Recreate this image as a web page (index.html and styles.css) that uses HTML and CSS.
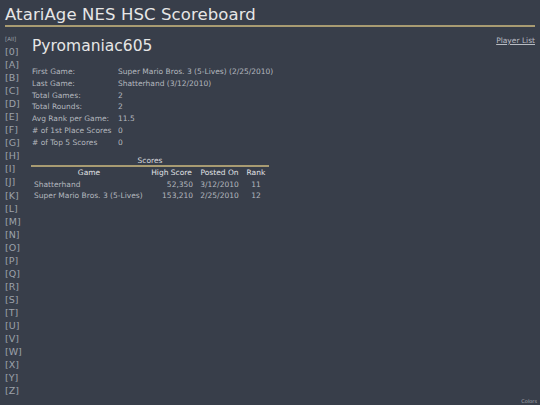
FILE: index.html
```html
<!DOCTYPE html>
<html>
<head>
<meta charset="utf-8">
<link rel="stylesheet" href="styles.css">
</head>
<body>
<div class="page">
  <h1 class="title">AtariAge NES HSC Scoreboard</h1>
  <div class="body">
    <nav class="letters">
      <a class="all">[All]</a>
      <a>[0]</a><a>[A]</a><a>[B]</a><a>[C]</a><a>[D]</a><a>[E]</a><a>[F]</a><a>[G]</a><a>[H]</a><a>[I]</a><a>[J]</a><a>[K]</a><a>[L]</a><a>[M]</a><a>[N]</a><a>[O]</a><a>[P]</a><a>[Q]</a><a>[R]</a><a>[S]</a><a>[T]</a><a>[U]</a><a>[V]</a><a>[W]</a><a>[X]</a><a>[Y]</a><a>[Z]</a>
    </nav>
    <main class="main">
      <div class="topline">
        <h2 class="player">Pyromaniac605</h2>
        <a class="plist">Player List</a>
      </div>
      <table class="info">
        <tr><td class="lbl">First Game:</td><td>Super Mario Bros. 3 (5-Lives) (2/25/2010)</td></tr>
        <tr><td class="lbl">Last Game:</td><td>Shatterhand (3/12/2010)</td></tr>
        <tr><td class="lbl">Total Games:</td><td>2</td></tr>
        <tr><td class="lbl">Total Rounds:</td><td>2</td></tr>
        <tr><td class="lbl">Avg Rank per Game:</td><td>11.5</td></tr>
        <tr><td class="lbl"># of 1st Place Scores</td><td>0</td></tr>
        <tr><td class="lbl"># of Top 5 Scores</td><td>0</td></tr>
      </table>
      <table class="scores">
        <caption>Scores</caption>
        <thead>
          <tr><th class="game">Game</th><th>High Score</th><th>Posted On</th><th>Rank</th></tr>
        </thead>
        <tbody>
          <tr><td class="g">Shatterhand</td><td class="r">52,350</td><td class="c">3/12/2010</td><td class="c">11</td></tr>
          <tr><td class="g">Super Mario Bros. 3 (5-Lives)</td><td class="r">153,210</td><td class="c">2/25/2010</td><td class="c">12</td></tr>
        </tbody>
      </table>
    </main>
  </div>
  <div class="colors">Colors</div>
</div>
</body>
</html>
```
FILE: styles.css
```css
html, body {
  margin: 0;
  padding: 0;
  background: #383e4a;
}
body {
  font-family: "DejaVu Sans", sans-serif;
  color: #c4c7cc;
  width: 540px;
  height: 405px;
  overflow: hidden;
}
.page {
  position: relative;
  height: 405px;
  padding: 0 5px;
  box-sizing: border-box;
}
.title {
  margin: 0;
  padding-top: 5px;
  font-size: 16.5px;
  font-weight: normal;
  color: #e6e6e6;
  line-height: 20px;
  border-bottom: 2px solid #a89b72;
  letter-spacing: 0.1px;
}
.body {
  display: flex;
  margin-top: 8px;
}
.letters {
  display: flex;
  flex-direction: column;
  width: 27px;
  flex: none;
}
.letters a {
  font-size: 9.5px;
  line-height: 13.05px;
  color: #9da2aa;
}
.letters a.all {
  font-size: 5.5px;
  line-height: 8px;
  margin-bottom: 2px;
}
.main {
  flex: 1;
}
.topline {
  display: flex;
  justify-content: space-between;
  align-items: flex-start;
}
.player {
  margin: 0;
  font-size: 15.5px;
  font-weight: normal;
  color: #e6e6e6;
  line-height: 20px;
  margin-top: 1px;
}
.plist {
  font-size: 7.5px;
  color: #b8bcc3;
  text-decoration: underline;
  margin-top: 1px;
}
.info {
  border-collapse: collapse;
  margin-top: 10px;
  font-size: 7.5px;
  color: #b4b8bf;
}
.info td {
  padding: 0;
  height: 11.75px;
  line-height: 11.75px;
}
.info td.lbl {
  width: 86px;
}
.scores {
  border-collapse: collapse;
  margin-top: 8px;
  font-size: 7.5px;
  width: 238px;
  margin-left: -1px;
}
.scores caption {
  color: #d8dade;
  border-bottom: 2px solid #a89b72;
  line-height: 9px;
  padding-bottom: 0;
}
.scores th {
  font-weight: normal;
  color: #e0e2e6;
  padding: 0 3px;
  line-height: 11.5px;
  white-space: nowrap;
}
.scores td {
  color: #b4b8bf;
  padding: 0 3px;
  line-height: 11.5px;
  white-space: nowrap;
}
.scores td.r { text-align: right; }
.scores td.c { text-align: center; }
.scores th.game { width: 110px; }
.colors {
  position: absolute;
  right: 3px;
  bottom: 1px;
  font-size: 5px;
  color: #a7abb3;
}
```
